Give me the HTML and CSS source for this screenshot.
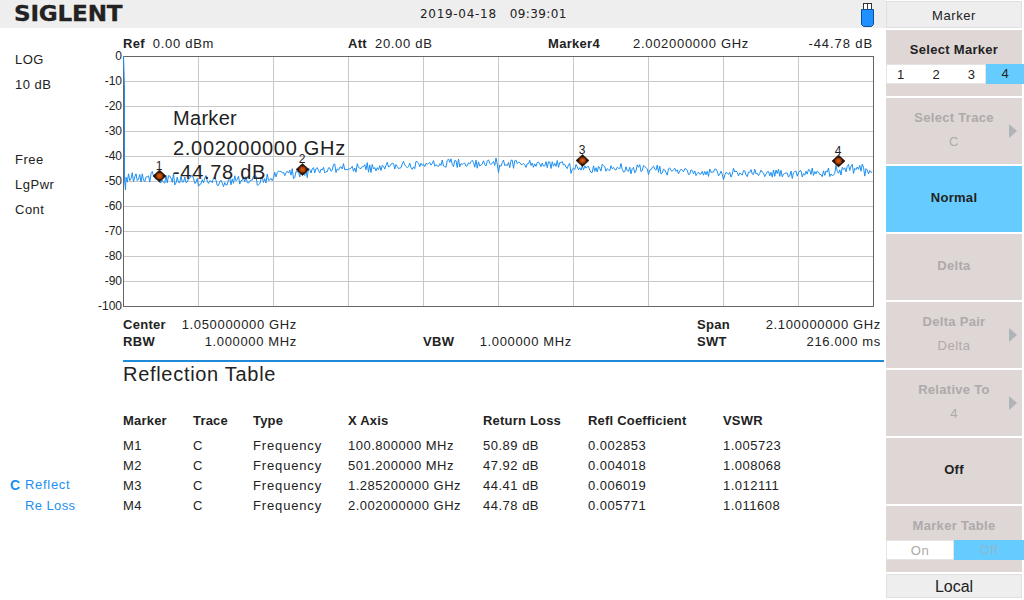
FILE: index.html
```html
<!DOCTYPE html>
<html lang="en">
<head>
<meta charset="utf-8">
<title>SIGLENT Reflection Table</title>
<link rel="stylesheet" href="styles.css">
</head>
<body>
<div class="app">
  <main class="main">
    <header class="topbar">
      <div class="logo-box"><div class="logo">SIGLENT</div></div>
      <div class="clock"><span class="date">2019-04-18</span><span class="time">09:39:01</span></div>
      <svg class="usb" width="13" height="24" viewBox="0 0 13 24">
        <rect x="2.5" y="0.5" width="8" height="6" fill="#fff" stroke="#333"/>
        <line x1="6.5" y1="0.5" x2="6.5" y2="6.5" stroke="#333"/>
        <path d="M0.5 6.5H12.5V21.5L10.5 23.5H2.5L0.5 21.5Z" fill="#1e90ff" stroke="#0d4f96"/>
      </svg>
    </header>
    <div class="body">
      <aside class="status">
        <div class="status-group first"><div>LOG</div><div>10 dB</div></div>
        <div class="status-group second"><div>Free</div><div>LgPwr</div><div>Cont</div></div>
        <div class="trace-group">
          <div class="trace-row"><b>C</b><span>Reflect</span></div>
          <div class="trace-row"><b></b><span class="tight">Re Loss</span></div>
        </div>
      </aside>
      <section class="content">
        <div class="info">
          <div class="info-ref"><b>Ref</b><span>0.00 dBm</span></div>
          <div class="info-att"><b>Att</b><span>20.00 dB</span></div>
          <div class="info-mk"><b>Marker4</b></div>
          <div class="info-freq">2.002000000 GHz</div>
          <div class="info-val">-44.78 dB</div>
        </div>
        <div class="plot-wrap">
          <svg class="plot" width="792" height="258" viewBox="92 54 792 258">
            <g id="grid" class="grid"></g>
            <g class="ticks">
              <text x="122" y="56">0</text><text x="122" y="81">-10</text>
              <text x="122" y="106">-20</text><text x="122" y="131">-30</text>
              <text x="122" y="156">-40</text><text x="122" y="181">-50</text>
              <text x="122" y="206">-60</text><text x="122" y="231">-70</text>
              <text x="122" y="256">-80</text><text x="122" y="281">-90</text>
              <text x="122" y="306">-100</text>
            </g>
            <rect class="frame" x="123.5" y="56.5" width="750" height="250"/>
            <polyline id="trace" class="trace" points=""/>
            <defs>
              <radialGradient id="mk">
                <stop offset="0" stop-color="#e0600f"/>
                <stop offset="0.42" stop-color="#a83c06"/>
                <stop offset="0.62" stop-color="#2a1408"/>
              </radialGradient>
            </defs>
            <g class="marker"><path d="M159.500 170L166 176L159.500 182L153 176Z"/><text x="159" y="170">1</text></g>
            <g class="marker"><path d="M302.500 163.500L309 169.500L302.500 175.500L296 169.500Z"/><text x="302" y="163">2</text></g>
            <g class="marker"><path d="M582.500 154.500L589 160.500L582.500 166.500L576 160.500Z"/><text x="582" y="154">3</text></g>
            <g class="marker"><path d="M838.500 155L845 161L838.500 167L832 161Z"/><text x="838" y="155">4</text></g>
          </svg>
          <div class="readout">
            <div class="r1">Marker</div>
            <div class="r2">2.002000000 GHz</div>
            <div class="r3">-44.78 dB</div>
          </div>
        </div>
        <div class="params">
          <div class="kv c1"><b>Center</b><span>1.050000000 GHz</span></div>
          <div class="kv c5"><b>Span</b><span>2.100000000 GHz</span></div>
          <div class="kv c1"><b>RBW</b><span>1.000000 MHz</span></div>
          <div class="kv c3"><b>VBW</b><span>1.000000 MHz</span></div>
          <div class="kv c5"><b>SWT</b><span>216.000 ms</span></div>
        </div>
        <h1 class="table-title">Reflection Table</h1>
        <table class="table">
          <thead>
            <tr><th class="w1">Marker</th><th class="w2">Trace</th><th class="w3">Type</th><th class="w4">X Axis</th><th class="w5">Return Loss</th><th class="w6">Refl Coefficient</th><th>VSWR</th></tr>
          </thead>
          <tbody>
            <tr><td>M1</td><td>C</td><td class="word">Frequency</td><td>100.800000 MHz</td><td>50.89 dB</td><td>0.002853</td><td>1.005723</td></tr>
            <tr><td>M2</td><td>C</td><td class="word">Frequency</td><td>501.200000 MHz</td><td>47.92 dB</td><td>0.004018</td><td>1.008068</td></tr>
            <tr><td>M3</td><td>C</td><td class="word">Frequency</td><td>1.285200000 GHz</td><td>44.41 dB</td><td>0.006019</td><td>1.012111</td></tr>
            <tr><td>M4</td><td>C</td><td class="word">Frequency</td><td>2.002000000 GHz</td><td>44.78 dB</td><td>0.005771</td><td>1.011608</td></tr>
          </tbody>
        </table>
      </section>
    </div>
  </main>
  <nav class="menu">
    <div class="menu-title">Marker</div>
    <div class="key top">
      <div class="key-main">Select Marker</div>
      <div class="toggle">
        <div class="seg seg-nums"><span>1</span><span>2</span><span>3</span></div>
        <div class="seg seg-on seg-4">4</div>
      </div>
    </div>
    <div class="key top off">
      <div class="key-main">Select Trace</div>
      <div class="key-sub">C</div>
      <i class="arrow"></i>
    </div>
    <div class="key center active"><div class="key-main">Normal</div></div>
    <div class="key center off"><div class="key-main">Delta</div></div>
    <div class="key top off">
      <div class="key-main">Delta Pair</div>
      <div class="key-sub">Delta</div>
      <i class="arrow"></i>
    </div>
    <div class="key top off">
      <div class="key-main">Relative To</div>
      <div class="key-sub">4</div>
      <i class="arrow"></i>
    </div>
    <div class="key center"><div class="key-main">Off</div></div>
    <div class="key top off">
      <div class="key-main">Marker Table</div>
      <div class="toggle">
        <div class="seg seg-plain">On</div>
        <div class="seg seg-on seg-off">Off</div>
      </div>
    </div>
    <div class="local">Local</div>
  </nav>
</div>
<script src="script.js"></script>
</body>
</html>
```

FILE: styles.css
```css
* { box-sizing: border-box; }
html, body { margin: 0; width: 1024px; height: 600px; overflow: hidden; background: #fff; }
body { font: 13px/20px "Liberation Sans", Arial, sans-serif; color: #222; }
b { font-weight: bold; letter-spacing: .3px; }

.app { display: flex; width: 1024px; height: 600px; }
.main { width: 886px; display: flex; flex-direction: column; }

.topbar { height: 28px; background: #eee; display: flex; align-items: center; padding-left: 14px; padding-right: 12px; }
.logo-box { width: 406px; }
.logo { display: inline-block; font: bold 22px/28px "DejaVu Sans", sans-serif; color: #222; letter-spacing: -.2px; transform: scaleX(1.05); transform-origin: left center; -webkit-text-stroke: .3px #222; }
.clock { display: flex; gap: 13px; font-family: "DejaVu Sans", sans-serif; font-size: 12px; }
.date { letter-spacing: .7px; }
.time { letter-spacing: .4px; }
.usb { margin-left: auto; margin-top: 2px; }

.body { flex: 1; display: flex; }
.status { width: 92px; padding-left: 15px; display: flex; flex-direction: column; line-height: 25px; letter-spacing: .5px; }
.status-group.first { margin-top: 19px; height: 100px; }
.status-group.second { height: 75px; }
.trace-group { margin-top: 253px; margin-left: -5px; line-height: 20.500px; color: #1e8ff0; }
.trace-row { display: flex; gap: 5px; }
.trace-row b { width: 10px; font-size: 14px; }
.trace-row span { letter-spacing: .7px; }
.trace-row .tight { letter-spacing: .4px; }

.content { flex: 1; min-width: 0; padding-left: 31px; display: flex; flex-direction: column; }
.info { height: 26px; padding-top: 6px; padding-right: 13px; display: flex; }
.info span { margin-left: 8px; letter-spacing: .7px; }
.info-ref { width: 225px; }
.info-att { width: 200px; }
.info-mk { width: 85px; }
.info-freq { width: 150px; letter-spacing: .7px; }
.info-val { margin-left: auto; letter-spacing: .9px; }

.plot-wrap { position: relative; height: 258px; margin-left: -31px; }
.plot { display: block; overflow: visible; }
.grid line { stroke: #c8c8c8; stroke-width: 1; }
.frame { fill: none; stroke: #666; }
.ticks text { font: 12px "Liberation Sans", sans-serif; fill: #222; text-anchor: end; dominant-baseline: central; }
.trace { fill: none; stroke: #1e8ff0; stroke-width: 1; }
.marker path { fill: url(#mk); stroke: #1c0d04; stroke-width: .6; }
.marker text { font: 12px "Liberation Sans", sans-serif; fill: #222; text-anchor: middle; }
.readout { position: absolute; left: 81px; top: 49px; font-size: 20px; color: #222; }
.r1 { line-height: 30px; letter-spacing: .3px; }
.r2 { line-height: 30px; letter-spacing: .7px; }
.r3 { line-height: 24px; margin-top: -3px; letter-spacing: .7px; }

.params { display: grid; grid-template-columns: 174px 126px 149px 125px 184px; grid-auto-rows: 17px; margin-top: 4px; line-height: 17px; height: 44px; }
.kv { display: flex; justify-content: space-between; }
.kv span { letter-spacing: .65px; }
.c1 { grid-column: 1; }
.c3 { grid-column: 3; }
.c5 { grid-column: 5; }

.table-title { margin: 0 2px 0 0; height: 26px; border-top: 2px solid #1e8ad8; font-size: 20px; font-weight: normal; line-height: 24px; letter-spacing: .7px; }

.table { border-collapse: collapse; margin-top: 25px; table-layout: fixed; width: 760px; }
.table th, .table td { padding: 0; text-align: left; height: 20px; letter-spacing: .5px; white-space: nowrap; }
.table th { padding-bottom: 5px; height: 25px; letter-spacing: .2px; }
.table td.word { letter-spacing: .85px; }
.w1 { width: 70px; }
.w2 { width: 60px; }
.w3 { width: 95px; }
.w4 { width: 135px; }
.w5 { width: 105px; }
.w6 { width: 135px; }

.menu { width: 138px; display: flex; flex-direction: column; gap: 2px; padding-top: 1px; }
.menu-title { width: 136px; height: 27px; background: #eee; border: 1px solid #e0e0e0; text-align: center; line-height: 28px; letter-spacing: .6px; }
.key { position: relative; width: 136px; height: 66px; background: #dfd6d6; text-align: center; }
.key.center { display: flex; align-items: center; justify-content: center; padding-bottom: 2px; }
.key.top { padding-top: 8px; }
.key-main { font-weight: bold; line-height: 24px; letter-spacing: .3px; }
.key-sub { line-height: 24px; letter-spacing: .5px; }
.key.off { color: #aeaaaa; }
.key.active { background: #66ccff; }
.arrow { position: absolute; right: 5px; top: 26px; width: 0; height: 0; border-left: 8px solid #aeb4b8; border-top: 7px solid transparent; border-bottom: 7px solid transparent; }
.toggle { display: flex; margin: 2px 0 0 -1px; width: 139px; height: 20px; }
.seg { height: 20px; line-height: 20px; }
.seg-nums { display: flex; justify-content: space-between; width: 100px; margin-left: 1px; padding: 0 10px; background: #fff; border: 1px solid #e4e4e4; color: #222; line-height: 19px; }
.seg-4 { width: 38px; color: #222; }
.seg-on { background: #66ccff; }
.seg-plain { width: 68px; margin-left: 1px; background: #fff; border: 1px solid #e4e4e4; color: #aaa; letter-spacing: .5px; line-height: 19px; }
.seg-off { width: 70px; color: #8fb8d0; letter-spacing: .5px; }
.local { width: 136px; height: 24px; background: #eee; border: 1px solid #e0e0e0; text-align: center; font-size: 16px; line-height: 23px; }
```

FILE: script.js
```js
(function () {
  var NS = "http://www.w3.org/2000/svg";
  var grid = document.getElementById("grid");
  function line(x1, y1, x2, y2) {
    var l = document.createElementNS(NS, "line");
    l.setAttribute("x1", x1); l.setAttribute("y1", y1);
    l.setAttribute("x2", x2); l.setAttribute("y2", y2);
    grid.appendChild(l);
  }
  for (var i = 1; i < 10; i++) {
    line(123.5 + i * 75, 56, 123.5 + i * 75, 306);
    line(123, 56.5 + i * 25, 873, 56.5 + i * 25);
  }
  var env = [[124,176],[160,178],[200,182],[240,181],[273,177],[300,172],[340,168],
    [400,166],[450,164],[510,163],[560,165],[600,169],[650,170],[700,172],
    [760,174],[800,174],[840,170],[873,170]];
  function base(x) {
    for (var k = 1; k < env.length; k++) {
      if (x <= env[k][0]) {
        var a = env[k - 1], b = env[k];
        return a[1] + (b[1] - a[1]) * (x - a[0]) / (b[0] - a[0]);
      }
    }
    return 170;
  }
  var seed = 12345;
  function rnd() { seed = (seed * 1103515245 + 12345) & 0x7fffffff; return seed / 0x7fffffff; }
  var pts = ["123.5,56", "124.5,88", "124.5,180", "125.5,190"];
  for (var x = 126; x <= 873; x += 1.25) {
    var amp = x < 300 || x > 820 ? 11 : 8;
    var y = base(x) + (rnd() - 0.5) * amp + (rnd() - 0.5) * 3;
    if (rnd() > 0.96) y += (rnd() - 0.5) * 10;
    pts.push(x + "," + y.toFixed(1));
  }
  document.getElementById("trace").setAttribute("points", pts.join(" "));
})();
```
